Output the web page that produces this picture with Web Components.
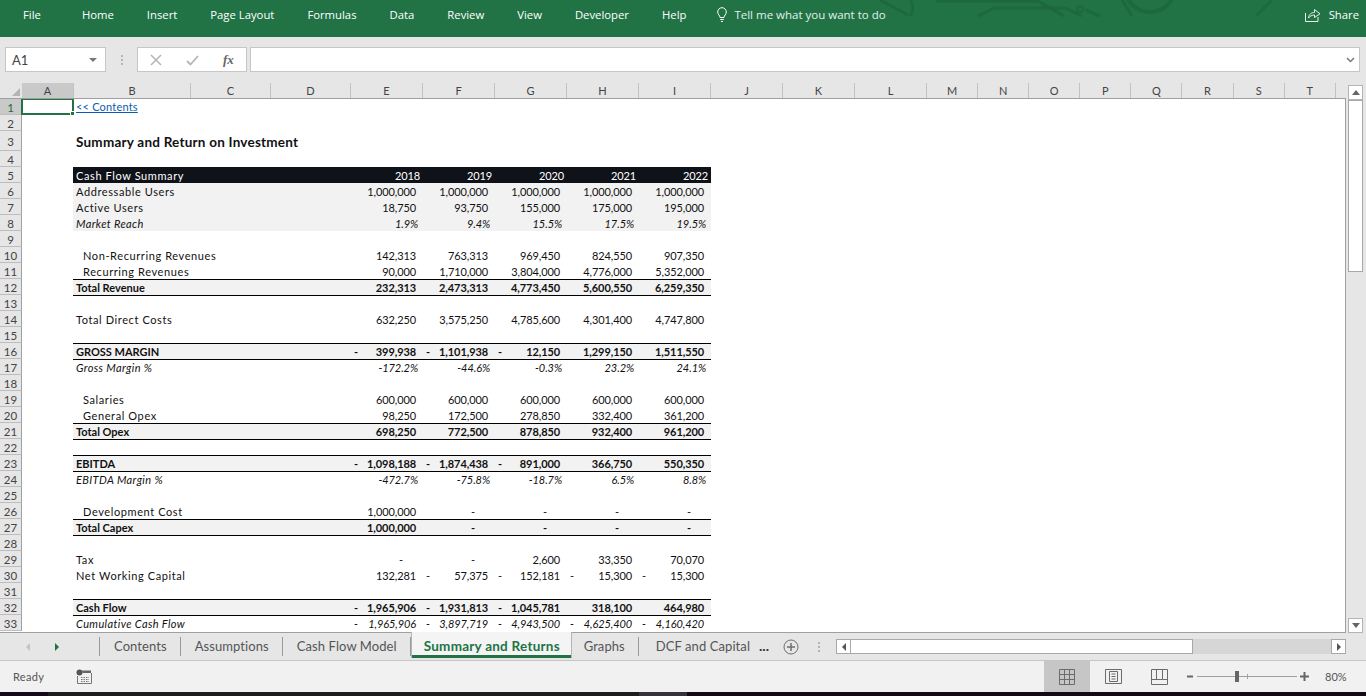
<!DOCTYPE html>
<html>
<head>
<meta charset="utf-8">
<title>Summary and Returns</title>
<style>
  html, body { margin: 0; height: 100%; overflow: hidden; background: #e6e6e6; }
  body { display: flex; flex-direction: column; height: 696px; }
</style>
</head>
<body>
<xl-ribbon></xl-ribbon>
<xl-formula-bar></xl-formula-bar>
<xl-sheet></xl-sheet>
<xl-tab-bar>
  <xl-sheet-tab>Contents</xl-sheet-tab>
  <xl-sheet-tab>Assumptions</xl-sheet-tab>
  <xl-sheet-tab>Cash Flow Model</xl-sheet-tab>
  <xl-sheet-tab active>Summary and Returns</xl-sheet-tab>
  <xl-sheet-tab>Graphs</xl-sheet-tab>
  <xl-sheet-tab last>DCF and Capital</xl-sheet-tab>
</xl-tab-bar>
<xl-status-bar></xl-status-bar>
<script>
/**
 * Ribbon: only the tab strip is shown, the ribbon itself is collapsed.
 */
class XlRibbon extends HTMLElement {
  constructor() {
    super();
    this.attachShadow({ mode: 'open' });
  }

  connectedCallback() {
    const items = ['Home', 'Insert', 'Page Layout', 'Formulas', 'Data', 'Review', 'View', 'Developer', 'Help'];
    this.shadowRoot.innerHTML = `
      <style>
        :host {
          display: flex;
          flex: none;
          align-items: center;
          height: 37px;
          padding: 0 7px 8px 23px;
          box-sizing: border-box;
          background: #217346;
          color: #fff;
          font: 11.3px "Open Sans", sans-serif;
          position: relative;
          overflow: hidden;
        }
        .file { margin-right: 41px; }
        nav { display: flex; gap: 33px; }
        .tell { display: flex; align-items: center; gap: 7px; margin-left: 31px; color: #e4efe9; font-size: 11.500px; }
        .share { display: flex; align-items: center; gap: 8px; margin-left: auto; }
        .art { position: absolute; left: 860px; top: 0; }
        .tell, .share, nav, .file { position: relative; }
      </style>
      <svg class="art" width="430" height="37" fill="none" stroke="#1d683f" stroke-width="3">
        <path d="M20 0L48 15M50 0Q56 8 50 16"/>
        <path d="M76 1H178L204 16"/>
        <path d="M118 16L134 8H205L222 16"/>
        <circle cx="220" cy="9" r="3" stroke-width="2"/>
        <path d="M226 10L240 16M262 0L272 16"/>
        <path d="M266 -10A24 22 0 0 0 314 -10" stroke-width="4"/>
        <path d="M396 16L412 0"/>
      </svg>
      <span class="file">File</span>
      <nav>${items.map(t => `<span>${t}</span>`).join('')}</nav>
      <span class="tell">
        <svg width="10" height="16" viewBox="0 0 10 16" fill="none" stroke="#fff" stroke-width="1">
          <path d="M3 10.5C3 8.5 .7 7.5 .7 5A4.3 4.3 0 0 1 9.300 5C9.300 7.500 7 8.500 7 10.500ZM3.200 12.500H6.800M4 14.500H6"/>
        </svg>
        Tell me what you want to do
      </span>
      <span class="share">
        <svg width="16" height="15" viewBox="0 0 16 15" fill="none" stroke="#e8f1ec" stroke-width="1">
          <path d="M.5 6V14.500H13V10"/>
          <path d="M3.500 11C4 7 6.500 5.500 9.500 5.500V2.500L15 6.800L9.500 10.500V8C7 8 5 9 3.500 11Z"/>
        </svg>
        Share
      </span>
    `;
  }
}

/**
 * Name box, cancel / enter / fx buttons and the formula input.
 */
class XlFormulaBar extends HTMLElement {
  constructor() {
    super();
    this.attachShadow({ mode: 'open' });
  }

  connectedCallback() {
    this.shadowRoot.innerHTML = `
      <style>
        :host {
          display: flex;
          flex: none;
          height: 45px;
          padding: 10px 6px 10px 5px;
          box-sizing: border-box;
          background: #e6e6e6;
          font: 12px Lato, sans-serif;
        }
        .box {
          display: flex;
          align-items: center;
          box-sizing: border-box;
          height: 25px;
          background: #fff;
          border: 1px solid #c6c6c6;
        }
        .name { width: 101px; padding: 0 8px 0 6px; justify-content: space-between; color: #444; font-size: 13px; }
        .caret { width: 0; height: 0; border: 4px solid transparent; border-top-color: #777; border-bottom: 0; }
        .dots { width: 31px; display: flex; flex-direction: column; align-items: center; justify-content: center; gap: 2px; }
        .dots i { width: 2px; height: 2px; background: #b4b4b4; }
        .fx { width: 110px; padding-left: 12px; gap: 24px; color: #777; }
        .fx em { font: italic 700 13px "Liberation Serif", serif; color: #666; }
        .input { flex: 1; margin-left: 3px; justify-content: flex-end; padding-right: 4px; }
      </style>
      <div class="box name"><span>A1</span><span class="caret"></span></div>
      <div class="dots"><i></i><i></i><i></i></div>
      <div class="box fx">
        <svg width="12" height="12" viewBox="0 0 12 12" stroke="#b5b5b5" stroke-width="1.500"><path d="M1 1L11 11M11 1L1 11"/></svg>
        <svg width="13" height="12" viewBox="0 0 13 12" fill="none" stroke="#b5b5b5" stroke-width="1.800"><path d="M1 7L4.500 10.500L12 2"/></svg>
        <em>fx</em>
      </div>
      <div class="box input">
        <svg width="9" height="6" viewBox="0 0 9 6" fill="none" stroke="#777" stroke-width="1.500"><path d="M1 1L4.500 4.500L8 1"/></svg>
      </div>
    `;
  }
}

// [row, label, style flags, values]. A value that starts with ~ is negative:
// the accounting format puts its minus sign at the left of the cell.
const TABLE = {
  5: ['Cash Flow Summary', 'head', ['2018', '2019', '2020', '2021', '2022']],
  6: ['Addressable Users', 'gray', ['1,000,000', '1,000,000', '1,000,000', '1,000,000', '1,000,000']],
  7: ['Active Users', 'gray', ['18,750', '93,750', '155,000', '175,000', '195,000']],
  8: ['Market Reach', 'gray pct', ['1.9%', '9.4%', '15.5%', '17.5%', '19.5%']],
  10: ['Non-Recurring Revenues', 'ind', ['142,313', '763,313', '969,450', '824,550', '907,350']],
  11: ['Recurring Revenues', 'ind', ['90,000', '1,710,000', '3,804,000', '4,776,000', '5,352,000']],
  12: ['Total Revenue', 'tot', ['232,313', '2,473,313', '4,773,450', '5,600,550', '6,259,350']],
  13: ['', 'top', []],
  14: ['Total Direct Costs', '', ['632,250', '3,575,250', '4,785,600', '4,301,400', '4,747,800']],
  16: ['GROSS MARGIN', 'tot', ['~399,938', '~1,101,938', '~12,150', '1,299,150', '1,511,550']],
  17: ['Gross Margin %', 'top pct', ['-172.2%', '-44.6%', '-0.3%', '23.2%', '24.1%']],
  19: ['Salaries', 'ind', ['600,000', '600,000', '600,000', '600,000', '600,000']],
  20: ['General Opex', 'ind', ['98,250', '172,500', '278,850', '332,400', '361,200']],
  21: ['Total Opex', 'tot', ['698,250', '772,500', '878,850', '932,400', '961,200']],
  22: ['', 'top', []],
  23: ['EBITDA', 'tot', ['~1,098,188', '~1,874,438', '~891,000', '366,750', '550,350']],
  24: ['EBITDA Margin %', 'top pct', ['-472.7%', '-75.8%', '-18.7%', '6.5%', '8.8%']],
  26: ['Development Cost', 'ind', ['1,000,000', '=', '=', '=', '=']],
  27: ['Total Capex', 'tot', ['1,000,000', '=', '=', '=', '=']],
  28: ['', 'top', []],
  29: ['Tax', '', ['=', '=', '2,600', '33,350', '70,070']],
  30: ['Net Working Capital', '', ['132,281', '~57,375', '~152,181', '~15,300', '~15,300']],
  32: ['Cash Flow', 'tot', ['~1,965,906', '~1,931,813', '~1,045,781', '318,100', '464,980']],
  33: ['Cumulative Cash Flow', 'top it', ['~1,965,906', '~3,897,719', '~4,943,500', '~4,625,400', '~4,160,420']]
};

const COL_WIDTHS = '52px 117px 80px 80px repeat(8, 72px) repeat(8, 51.1px) 1fr';

/**
 * The worksheet: column headers, row headers, cells and vertical scroll bar.
 */
class XlSheet extends HTMLElement {
  constructor() {
    super();
    this.attachShadow({ mode: 'open' });
  }

  cell(value) {
    if (value === '=') return '<div class="v dash">-</div>';
    if (value[0] === '~') return `<div class="v"><span>-</span><span>${value.slice(1)}</span></div>`;
    return `<div class="v"><span></span><span>${value}</span></div>`;
  }

  row(n) {
    const data = TABLE[n];
    let band = '';
    if (data) {
      band = `<div class="band ${data[1]}">
        <div class="label">${data[0]}</div>
        ${data[2].map(v => this.cell(v)).join('')}
      </div>`;
    } else if (n === 1) {
      band = '<div class="band"><div class="label link">&lt;&lt; Contents</div></div>';
    } else if (n === 3) {
      band = '<div class="band"><div class="label title">Summary and Return on Investment</div></div>';
    }
    return `<div class="row r${n}"><div class="num${n === 1 ? ' sel' : ''}">${n}</div><div class="a"></div>${band}</div>`;
  }

  connectedCallback() {
    const letters = 'ABCDEFGHIJKLMNOPQRST'.split('');
    const rows = [];
    for (let n = 1; n <= 33; n++) rows.push(this.row(n));
    this.shadowRoot.innerHTML = `
      <style>
        :host {
          display: grid;
          flex: 1;
          min-height: 0;
          grid-template-columns: 1fr 20px;
          background: #e6e6e6;
          font: 11px Lato, sans-serif;
          color: #111;
        }
        .main { display: flex; flex-direction: column; min-width: 0; overflow: hidden; }
        .cols {
          display: grid;
          flex: none;
          grid-template-columns: 22px ${COL_WIDTHS};
          height: 17px;
          padding-top: 1px;
          box-sizing: border-box;
          border-bottom: 1px solid #a0a0a0;
          color: #444;
          font-size: 11px;
        }
        .cols div { display: flex; align-items: center; justify-content: center; border-right: 1px solid #c2c2c2; height: 15px; }
        .cols .corner { border: 0; position: relative; }
        .cols .corner::after {
          content: ""; position: absolute; right: 2px; bottom: 2px;
          border-style: solid; border-width: 0 0 8px 8px;
          border-color: transparent transparent #b4b4b4 transparent;
        }
        .cols .hot { background: #c9c9c9; }
        .cols .end { border-right: 0; }
        .grid {
          flex: 1;
          min-height: 0;
          position: relative;
          overflow: hidden;
          background: #fff;
          border-right: 1px solid #a0a0a0;
          border-bottom: 1px solid #a0a0a0;
        }
        .row { display: grid; grid-template-columns: 22px 51px 638px 1fr; height: 16px; }
        .r3 { height: 20px; }
        .num {
          display: flex; align-items: center; justify-content: center;
          box-sizing: border-box;
          padding-top: 1px;
          background: #e6e6e6;
          color: #444;
          font-size: 11.500px;
          border-right: 1px solid #a0a0a0;
          border-bottom: 1px solid #bdbdbd;
        }
        .num.sel { background: #c9c9c9; color: #1d6a3f; }
        .band {
          display: grid;
          grid-template-columns: 278px repeat(5, 72px);
          box-sizing: border-box;
          align-items: center;
        }
        .label { padding-left: 3px; white-space: nowrap; letter-spacing: .6px; }
        .v { display: flex; justify-content: space-between; padding: 0 7px 0 3px; letter-spacing: -.1px; }
        .dash { justify-content: flex-end; padding-right: 20px; }
        .head { background: #101219; color: #fff; }
        .head .v { padding-right: 3px; }
        .gray { background: #f2f2f2; }
        .ind .label { padding-left: 10px; }
        .tot { background: #f2f2f2; font-weight: 700; border-top: 1px solid #000; }
        .tot .label { letter-spacing: 0; }
        .top { border-top: 1px solid #000; }
        .pct { font-style: italic; }
        .pct .v { padding-right: 5px; }
        .it { font-style: italic; }
        .pct .label, .it .label { letter-spacing: .38px; }
        .link { color: #0b5cad; text-decoration: underline; letter-spacing: .2px; padding-bottom: 2px; }
        .title { font-size: 13.500px; font-weight: 700; letter-spacing: .23px; padding-top: 2px; }
        .cursor {
          position: absolute; left: 21px; top: -1px; width: 53px; height: 17px;
          box-sizing: border-box; border: 2px solid #217346;
        }
        .cursor::after {
          content: ""; position: absolute; right: -3px; bottom: -3px;
          width: 5px; height: 5px; background: #217346; border: 1px solid #fff; box-sizing: border-box;
        }
        .scroll { display: flex; flex-direction: column; align-items: flex-start; padding: 3px 0 0 2px; }
        .btn {
          width: 15px; height: 15px; box-sizing: border-box; flex: none;
          background: #fff; border: 1px solid #b4b4b4;
          display: flex; align-items: center; justify-content: center;
        }
        .up { width: 0; height: 0; border: 4px solid transparent; border-bottom: 5px solid #666; border-top: 0; }
        .down { width: 0; height: 0; border: 4px solid transparent; border-top: 5px solid #666; border-bottom: 0; }
        .thumb { width: 15px; height: 172px; flex: none; box-sizing: border-box; background: #fff; border: 1px solid #a8a8a8; }
        .track { flex: 1; }
      </style>
      <div class="main">
        <div class="cols">
          <div class="corner"></div>
          ${letters.map((l, i) => `<div class="${i === 0 ? 'hot' : ''}">${l}</div>`).join('')}
          <div class="end"></div>
        </div>
        <div class="grid">
          ${rows.join('')}
          <div class="cursor"></div>
        </div>
      </div>
      <div class="scroll">
        <div class="btn"><i class="up"></i></div>
        <div class="thumb"></div>
        <div class="track"></div>
        <div class="btn"><i class="down"></i></div>
      </div>
    `;
  }
}

/** One worksheet tab. The name comes in through the slot. */
class XlSheetTab extends HTMLElement {
  constructor() {
    super();
    this.attachShadow({ mode: 'open' });
  }

  connectedCallback() {
    this.shadowRoot.innerHTML = `
      <style>
        :host {
          display: flex;
          align-items: center;
          height: 27px;
          box-sizing: border-box;
          padding: 0 14px 1px;
          color: #555;
          font: 13px Lato, sans-serif;
          letter-spacing: .08px;
          position: relative;
        }
        :host(:not([active]):not([last]))::after {
          content: ""; position: absolute; right: 0; top: 4px; bottom: 4px; width: 1px; background: #9a9a9a;
        }
        :host([active]) {
          height: 26px;
          margin: -1px -2px 0 0;
          background: #f4f4f4;
          color: #217346;
          font-weight: 700;
          font-size: 13.500px;
          letter-spacing: .25px;
          padding: 1px 0 0 12px;
          width: 161px;
          border-left: 1px solid #b4b4b4;
          border-right: 1px solid #b4b4b4;
          box-shadow: inset 0 -3px 0 #217346;
        }
        :host([last]) { padding: 0 9px 1px 17px; }
      </style>
      <slot></slot>
    `;
  }
}

/** Sheet navigation, the tabs and the horizontal scroll bar. */
class XlTabBar extends HTMLElement {
  constructor() {
    super();
    this.attachShadow({ mode: 'open' });
  }

  connectedCallback() {
    this.shadowRoot.innerHTML = `
      <style>
        :host {
          display: flex;
          flex: none;
          align-items: stretch;
          height: 28px;
          box-sizing: border-box;
          background: #e6e6e6;
          border-bottom: 1px solid #c6c6c6;
          font: 13px Lato, sans-serif;
          color: #555;
        }
        .nav { display: flex; align-items: center; width: 100px; flex: none; box-sizing: border-box; padding-left: 26px; gap: 25px; border-right: 1px solid #9a9a9a; margin: 4px 0; }
        .l { border: 4px solid transparent; border-right: 4px solid #c4c4c4; border-left: 0; }
        .r { border: 4px solid transparent; border-left: 4px solid #217346; border-right: 0; }
        .tabs { display: flex; flex: none; align-items: flex-start; }
        .more { width: 24px; flex: none; font-weight: 700; font-size: 14px; color: #333; display: flex; align-items: center; padding-bottom: 2px; box-sizing: border-box; }
        .plus { flex: none; display: flex; align-items: center; }
        .dots { width: 37px; padding-left: 3px; box-sizing: border-box; flex: none; display: flex; flex-direction: column; align-items: center; justify-content: center; gap: 2px; }
        .dots i { width: 2px; height: 2px; background: #b4b4b4; }
        .bar { flex: 1; display: flex; align-items: center; padding-right: 20px; }
        .btn { width: 15px; height: 15px; box-sizing: border-box; background: #fff; border: 1px solid #a8a8a8; flex: none; display: flex; align-items: center; justify-content: center; }
        .btn .l { border-right-color: #555; }
        .btn .r { border-left-color: #555; }
        .thumb { width: 342px; height: 15px; flex: none; box-sizing: border-box; background: #fff; border: 1px solid #a8a8a8; border-left: 0; }
        .track { flex: 1; height: 15px; background: #d6d6d6; }
      </style>
      <div class="nav"><i class="l"></i><i class="r"></i></div>
      <div class="tabs"><slot></slot></div>
      <div class="more">...</div>
      <div class="plus">
        <svg width="16" height="16" viewBox="0 0 16 16" fill="none" stroke="#6f6f6f"><circle cx="8" cy="8" r="7"/><path d="M8 4V12M4 8H12" stroke-width="1.500"/></svg>
      </div>
      <div class="dots"><i></i><i></i><i></i></div>
      <div class="bar">
        <div class="btn"><i class="l"></i></div>
        <div class="thumb"></div>
        <div class="track"></div>
        <div class="btn"><i class="r"></i></div>
      </div>
    `;
  }
}

/** Status bar with view buttons and the zoom slider. */
class XlStatusBar extends HTMLElement {
  constructor() {
    super();
    this.attachShadow({ mode: 'open' });
  }

  connectedCallback() {
    this.shadowRoot.innerHTML = `
      <style>
        :host {
          display: flex;
          flex: none;
          flex-direction: column;
          height: 35px;
          background: #f1f1f1;
          font: 11px Lato, sans-serif;
          color: #555;
        }
        .bar { flex: 1; display: flex; align-items: center; padding-left: 13px; }
        .ready { letter-spacing: .3px; }
        .macro { margin-left: 32px; }
        .views { display: flex; align-self: stretch; margin-left: auto; }
        .view { width: 46px; display: flex; align-items: center; justify-content: center; }
        .view.on { background: #c6c6c6; }
        .zoom { display: flex; align-items: center; margin-left: 5px; margin-right: 19px; }
        .slider { width: 100px; height: 1px; background: #a0a0a0; margin: 0 3px 0 3px; display: flex; align-items: center; }
        .slider .knob { width: 4px; height: 11px; background: #666; margin-left: 38px; }
        .slider .tick { width: 1px; height: 5px; background: #a0a0a0; margin-left: 8px; }
        .pct { margin-left: 16px; width: 22px; }
        .strip { height: 4px; background: linear-gradient(90deg, #12081a 48px, #1c1c1e 48px, #1c1c1e 639px, #35323a 639px, #35323a 687px, #120a14 687px); }
      </style>
      <div class="bar">
        <span class="ready">Ready</span>
        <svg class="macro" width="16" height="15" viewBox="0 0 16 15" fill="none">
          <circle cx="3.500" cy="3.500" r="3" fill="#555"/>
          <path d="M6 1.500H15V4H6.500Z" fill="#666"/>
          <path d="M1.500 7V14.500H15.500V4" stroke="#777"/>
          <path d="M5 8.500H13M5 10.500H13M5 12.500H13" stroke="#777" stroke-dasharray="1.500 1"/>
        </svg>
        <div class="views">
          <div class="view on">
            <svg width="16" height="16" viewBox="0 0 16 16" fill="none" stroke="#6b6b6b"><path d="M.5 .5H15.500V15.500H.5ZM5.500 .5V15.500M10.500 .5V15.500M.5 5.500H15.500M.5 10.500H15.500"/></svg>
          </div>
          <div class="view">
            <svg width="17" height="15" viewBox="0 0 17 15" fill="none" stroke="#6b6b6b"><path d="M.5 .5H16.500V14.500H.5ZM4.500 2.500H12.500V12.500H4.500ZM6.500 5H10.500M6.500 7.500H10.500M6.500 10H10.500"/></svg>
          </div>
          <div class="view">
            <svg width="17" height="16" viewBox="0 0 17 16" fill="none" stroke="#6b6b6b"><path d="M.5 .5H16.500V15.500H.5ZM.5 10.500H11.500V.5M5.500 .5V10.500M11.500 10.500H16.500"/></svg>
          </div>
        </div>
        <div class="zoom">
          <svg width="7" height="7" viewBox="0 0 7 7" stroke="#666" stroke-width="2"><path d="M0 3.500H6"/></svg>
          <div class="slider"><i class="knob"></i><i class="tick"></i></div>
          <svg width="9" height="9" viewBox="0 0 9 9" stroke="#666" stroke-width="2"><path d="M0 4.500H9M4.500 0V9"/></svg>
          <span class="pct">80%</span>
        </div>
      </div>
      <div class="strip"></div>
    `;
  }
}

customElements.define('xl-ribbon', XlRibbon);
customElements.define('xl-formula-bar', XlFormulaBar);
customElements.define('xl-sheet', XlSheet);
customElements.define('xl-sheet-tab', XlSheetTab);
customElements.define('xl-tab-bar', XlTabBar);
customElements.define('xl-status-bar', XlStatusBar);
</script>
</body>
</html>
